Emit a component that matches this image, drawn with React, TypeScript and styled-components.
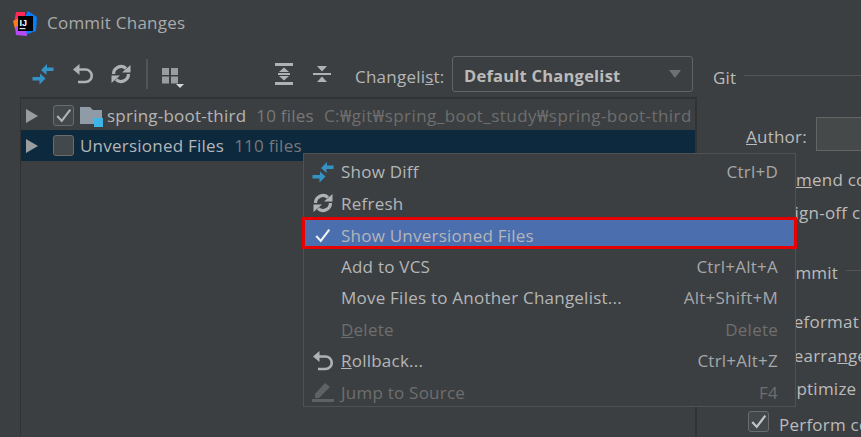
import React from 'react';
import styled, { createGlobalStyle } from 'styled-components';

const GlobalStyle = createGlobalStyle`
  html, body {
    margin: 0;
    padding: 0;
    background: #3c3f41;
  }
  * {
    box-sizing: border-box;
  }
`;

const ShowDiffIcon: React.FC = () => (
  <svg width="22" height="22" viewBox="0 0 22 22">
    <path d="M9 7 L15 1 L15 4.5 L21.5 4.5 L21.5 8 L14.5 8 L14.5 12 Z" fill="#3592c4" />
    <path d="M13.5 15.5 L8 10.5 L8 14 L0.5 14 L0.5 17.5 L7.5 17.5 L7.5 21.5 Z" fill="#3592c4" />
  </svg>
);

const UndoIcon: React.FC<{ color?: string }> = ({ color = '#afb1b3' }) => (
  <svg width="22" height="22" viewBox="0 0 22 22" fill="none">
    <path d="M1 6.5 L7.5 1 L7.5 12 Z" fill={color} />
    <path d="M6 6.5 H13.5 A6.25 6.25 0 0 1 13.5 19 H6" stroke={color} strokeWidth="2.6" />
  </svg>
);

const RefreshIcon: React.FC = () => (
  <svg width="22" height="22" viewBox="0 0 22 22" fill="none">
    <path d="M3.5 11 A7.5 7.5 0 0 1 16 5.5" stroke="#afb1b3" strokeWidth="3.2" />
    <path d="M18.5 11 A7.5 7.5 0 0 1 6 16.5" stroke="#afb1b3" strokeWidth="3.2" />
    <path d="M12 9.5 H20.5 V2 Z" fill="#afb1b3" />
    <path d="M10 12.5 H1.5 V20 Z" fill="#afb1b3" />
  </svg>
);

const GroupIcon: React.FC = () => (
  <svg width="24" height="28" viewBox="0 0 24 28">
    <rect x="0" y="8" width="7" height="7" fill="#9a9c9e" />
    <rect x="9" y="8" width="7" height="7" fill="#9a9c9e" />
    <rect x="0" y="16.5" width="7" height="7" fill="#9a9c9e" />
    <rect x="9" y="16.5" width="7" height="7" fill="#9a9c9e" />
    <path d="M14 24 H22 L18 28 Z" fill="#d5d7d9" />
  </svg>
);

const ExpandAllIcon: React.FC = () => (
  <svg width="20" height="22" viewBox="0 0 20 22">
    <rect x="1" y="0" width="18" height="3" fill="#afb1b3" />
    <rect x="1" y="19" width="18" height="3" fill="#afb1b3" />
    <rect x="4" y="10" width="12" height="2" fill="#afb1b3" />
    <path d="M10 4.5 L15 9 H5 Z" fill="#afb1b3" />
    <path d="M10 17.5 L15 13 H5 Z" fill="#afb1b3" />
  </svg>
);

const CollapseAllIcon: React.FC = () => (
  <svg width="20" height="20" viewBox="0 0 20 20">
    <rect x="1" y="9" width="18" height="2" fill="#afb1b3" />
    <path d="M10 7.5 L15 2 H5 Z" fill="#afb1b3" />
    <path d="M10 12.5 L15 18 H5 Z" fill="#afb1b3" />
  </svg>
);

const PencilIcon: React.FC = () => (
  <svg width="22" height="22" viewBox="0 0 22 22">
    <path d="M3 13 L13 2 L18 6 L7 17 L3 17 Z" fill="#5f6163" />
    <rect x="0" y="18" width="22" height="3" fill="#5f6163" />
  </svg>
);

const CheckIcon: React.FC<{ color?: string }> = ({ color = '#eef0f2' }) => (
  <svg width="18" height="17" viewBox="0 0 20 18" fill="none">
    <path d="M2.5 9.5 L7.5 15 L17 2.5" stroke={color} strokeWidth="2.4" />
  </svg>
);

const Logo: React.FC = () => (
  <svg width="24" height="25" viewBox="0 0 24 25">
    <path d="M3 1 H12 V12 H1 Z" fill="#fe2857" />
    <path d="M15 0 L24 6 L23 20 L12 24 L8 12 Z" fill="#087cfa" />
    <path d="M0 10 L6 7 L8 17 L2 18 Z" fill="#fe7d1b" />
    <path d="M2 16 L12 12 L14 25 L3 24 Z" fill="#b74af7" />
    <rect x="5" y="5" width="15" height="15" fill="#000" />
    <rect x="6.5" y="17" width="6" height="1.2" fill="#d8d8d8" />
    <LogoLetters x="6.5" y="14.5">IJ</LogoLetters>
  </svg>
);

const Caret: React.FC = () => (
  <svg width="12" height="14" viewBox="0 0 12 14">
    <path d="M0 0 L12 7 L0 14 Z" fill="#9a9da0" />
  </svg>
);

const FolderIcon: React.FC = () => (
  <FolderBox>
    <svg width="24" height="22" viewBox="0 0 24 22">
      <path d="M0 1 H10 L13 4 H22 V18 H0 Z" fill="#8f9ca8" />
      <rect x="14" y="12" width="9" height="9" fill="#3db5e6" />
    </svg>
  </FolderBox>
);

const App: React.FC = () => {
  return (
    <Window>
      <GlobalStyle />
      <TitleBar>
        <Logo />
        <Title>Commit Changes</Title>
      </TitleBar>
      <Body>
        <LeftColumn>
          <Toolbar>
            <ToolIcon $gap={18}><ShowDiffIcon /></ToolIcon>
            <ToolIcon $gap={16}><UndoIcon /></ToolIcon>
            <ToolIcon $gap={14}><RefreshIcon /></ToolIcon>
            <ToolSeparator />
            <ToolIcon $gap={88}><GroupIcon /></ToolIcon>
            <ToolIcon $gap={18}><ExpandAllIcon /></ToolIcon>
            <ToolIcon $gap={23}><CollapseAllIcon /></ToolIcon>
            <ChangelistLabel>Changeli<u>s</u>t:</ChangelistLabel>
            <Combo>
              <ComboText>Default Changelist</ComboText>
              <ComboArrow />
            </Combo>
          </Toolbar>
          <Tree>
            <TreeRow>
              <Caret />
              <Checkbox $checked><CheckIcon color="#b0b2b4" /></Checkbox>
              <FolderIcon />
              <RowName>spring-boot-third</RowName>
              <RowCount>10 files</RowCount>
              <RowPath>C:₩git₩spring_boot_study₩spring-boot-third</RowPath>
            </TreeRow>
            <TreeRow $selected>
              <Caret />
              <Checkbox />
              <RowName $tight>Unversioned Files</RowName>
              <RowCount>110 files</RowCount>
            </TreeRow>
          </Tree>
        </LeftColumn>
        <RightColumn>
          <Legend>
            <LegendText>Git</LegendText>
            <LegendLine />
          </Legend>
          <AuthorRow>
            <LegendText><u>A</u>uthor:</LegendText>
            <AuthorInput />
          </AuthorRow>
          <OptionText $top={18} $indent={72}>A<u>m</u>end commit</OptionText>
          <OptionText $top={11} $indent={72}>Sign-off commit</OptionText>
          <Legend $top={35} $indent={61}>
            <LegendText>Commit</LegendText>
            <LegendLine />
          </Legend>
          <OptionText $top={30} $indent={70}>Reformat code</OptionText>
          <OptionText $top={12} $indent={70}>Rearra<u>n</u>ge code</OptionText>
          <OptionText $top={11} $indent={70}>Optimize imports</OptionText>
          <PerformRow>
            <Checkbox $checked><CheckIcon color="#c4c6c8" /></Checkbox>
            <PerformText>Perform code analysis</PerformText>
          </PerformRow>
        </RightColumn>
      </Body>
      <Menu>
        <MenuRow>
          <MenuIcon><ShowDiffIcon /></MenuIcon>
          <MenuLabel>Show Diff</MenuLabel>
          <Shortcut>Ctrl+D</Shortcut>
        </MenuRow>
        <MenuRow>
          <MenuIcon><RefreshIcon /></MenuIcon>
          <MenuLabel>Refresh</MenuLabel>
        </MenuRow>
        <MenuRow $active>
          <MenuIcon><CheckIcon /></MenuIcon>
          <MenuLabel>Show Unversioned Files</MenuLabel>
        </MenuRow>
        <MenuRow>
          <MenuIcon />
          <MenuLabel>Add to VCS</MenuLabel>
          <Shortcut>Ctrl+Alt+A</Shortcut>
        </MenuRow>
        <MenuRow>
          <MenuIcon />
          <MenuLabel>Move Files to Another Changelist...</MenuLabel>
          <Shortcut>Alt+Shift+M</Shortcut>
        </MenuRow>
        <MenuRow>
          <MenuIcon />
          <MenuLabel $disabled><u>D</u>elete</MenuLabel>
          <Shortcut $disabled>Delete</Shortcut>
        </MenuRow>
        <MenuRow>
          <MenuIcon><UndoIcon /></MenuIcon>
          <MenuLabel><u>R</u>ollback...</MenuLabel>
          <Shortcut>Ctrl+Alt+Z</Shortcut>
        </MenuRow>
        <MenuRow>
          <MenuIcon><PencilIcon /></MenuIcon>
          <MenuLabel $disabled>Jump to Source</MenuLabel>
          <Shortcut $disabled>F4</Shortcut>
        </MenuRow>
      </Menu>
    </Window>
  );
};

const Window = styled.div`
  position: relative;
  width: 861px;
  height: 437px;
  overflow: hidden;
  background: #3c3f41;
  color: #bbbbbb;
  font-family: "Open Sans", "Noto Sans", sans-serif;
  font-size: 17px;
  letter-spacing: 0.23px;
`;

const LogoLetters = styled.text`
  font-family: "Liberation Sans", sans-serif;
  font-size: 9px;
  font-weight: 700;
  letter-spacing: 0;
  fill: #ffffff;
`;

const TitleBar = styled.div`
  display: flex;
  align-items: center;
  height: 46px;
  padding-left: 13px;
`;

const Title = styled.div`
  margin: 0 0 2px 10px;
  color: #a8abad;
`;

const Body = styled.div`
  display: flex;
  padding-left: 20px;
`;

const LeftColumn = styled.div`
  width: 677px;
  flex: none;
`;

const Toolbar = styled.div`
  display: flex;
  align-items: center;
  height: 51px;
  padding: 5px 0 0 12px;
`;

const ToolIcon = styled.div<{ $gap: number }>`
  display: flex;
  flex: none;
  align-items: center;
  margin-right: ${({ $gap }) => $gap}px;
`;

const ToolSeparator = styled.div`
  width: 2px;
  height: 30px;
  margin-right: 14px;
  background: #525456;
`;

const ChangelistLabel = styled.label`
  width: 97px;
  flex: none;
  padding-top: 4px;
  white-space: nowrap;
  color: #b4b6b8;
`;

const Combo = styled.div`
  display: flex;
  align-items: center;
  justify-content: space-between;
  width: 241px;
  height: 36px;
  padding: 0 11px;
  background: #3c3f41;
  border: 1px solid #646464;
  border-radius: 3px;
  font-size: 16.5px;
  font-weight: 700;
  color: #bbbbbb;
`;

const ComboText = styled.span`
  padding-top: 3px;
`;

const ComboArrow = styled.div`
  width: 0;
  height: 0;
  border-left: 6px solid transparent;
  border-right: 6px solid transparent;
  border-top: 8px solid #6e7072;
`;

const Tree = styled.div`
  height: 340px;
  background: #3c3f41;
  border: 1px solid #323232;
  border-width: 2px 2px 0 1px;
`;

const TreeRow = styled.div<{ $selected?: boolean }>`
  display: flex;
  align-items: center;
  height: 31px;
  padding-left: 5px;
  padding-top: ${({ $selected }) => ($selected ? '0' : '2px')};
  white-space: nowrap;
  background: ${({ $selected }) => ($selected ? '#0d293e' : 'transparent')};
`;

const Checkbox = styled.div<{ $checked?: boolean }>`
  display: flex;
  align-items: center;
  justify-content: center;
  flex: none;
  width: 21px;
  height: 21px;
  margin-left: 15px;
  background: #43494a;
  border: 1px solid #6b6b6b;
  border-radius: 3px;
`;

const FolderBox = styled.div`
  display: flex;
  margin: 2px 3px 0 6px;
`;

const RowName = styled.span<{ $tight?: boolean }>`
  margin-left: ${({ $tight }) => ($tight ? '6px' : '0')};
  color: #b4b6b8;
`;

const RowCount = styled.span`
  margin-left: 10px;
  color: #787878;
`;

const RowPath = styled.span`
  margin-left: 10px;
  letter-spacing: 0.45px;
  color: #6e6e6e;
`;

const RightColumn = styled.div`
  flex: none;
  width: 200px;
  padding-left: 16px;
  white-space: nowrap;
`;

const Legend = styled.div<{ $top?: number; $indent?: number }>`
  display: flex;
  align-items: center;
  gap: 8px;
  height: 22px;
  margin-top: ${({ $top }) => $top ?? 18}px;
  margin-left: ${({ $indent }) => $indent ?? 0}px;
`;

const LegendText = styled.span`
  padding-top: 4px;
`;

const LegendLine = styled.div`
  flex: 1;
  height: 1px;
  background: #535557;
`;

const AuthorRow = styled.div`
  display: flex;
  align-items: center;
  gap: 9px;
  height: 34px;
  margin: 31px 0 0 33px;
`;

const AuthorInput = styled.div`
  width: 80px;
  height: 34px;
  background: #45494a;
  border: 1px solid #646464;
`;

const OptionText = styled.div<{ $top: number; $indent: number }>`
  height: 22px;
  line-height: 22px;
  margin-top: ${({ $top }) => $top}px;
  margin-left: ${({ $indent }) => $indent}px;
`;

const PerformRow = styled.div`
  display: flex;
  align-items: flex-start;
  gap: 10px;
  height: 26px;
  margin: 11px 0 0 20px;
`;

const PerformText = styled.span`
  margin-top: 2px;
`;

const Menu = styled.div`
  position: absolute;
  left: 303px;
  top: 153px;
  width: 493px;
  height: 254px;
  padding-top: 2px;
  background: #3c3f41;
  border: 1px solid #515151;
`;

const MenuRow = styled.div<{ $active?: boolean }>`
  display: flex;
  align-items: center;
  height: 31.5px;
  padding-right: 17px;
  ${({ $active }) =>
    $active &&
    `
    height: 32px;
    margin: -2px -2px 1.5px;
    padding-top: 4px;
    background: #4b6eaf;
    border: 3px solid #e60000;
    & > :first-child {
      margin-left: -1px;
    }
  `}
`;

const MenuIcon = styled.div`
  display: flex;
  align-items: center;
  justify-content: center;
  flex: none;
  width: 37px;
`;

const MenuLabel = styled.span<{ $disabled?: boolean }>`
  flex: 1;
  color: ${({ $disabled }) => ($disabled ? '#6e6e6e' : '#b4b6b8')};
`;

const Shortcut = styled.span<{ $disabled?: boolean }>`
  color: ${({ $disabled }) => ($disabled ? '#6e6e6e' : '#a5a7a9')};
`;

export default App;
